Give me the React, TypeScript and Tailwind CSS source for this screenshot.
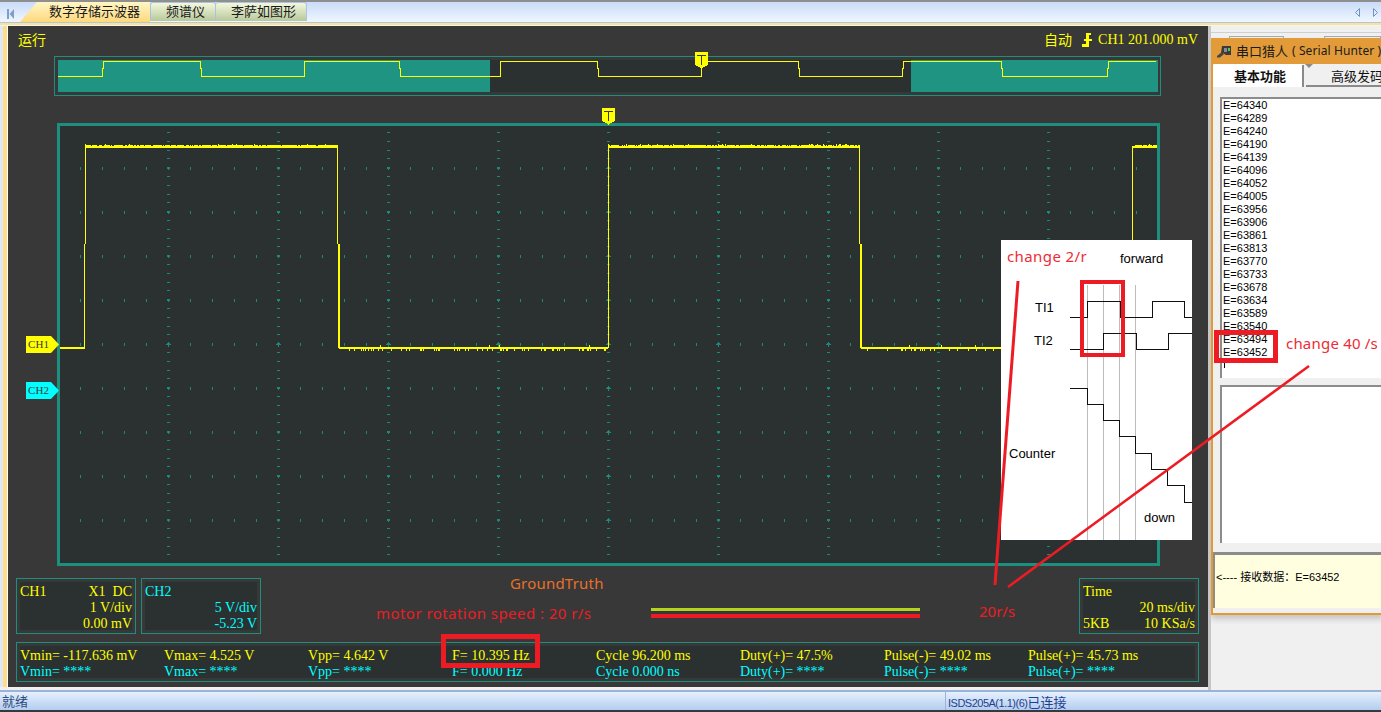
const TEAL = "#1a8a7a";
const YELLOW = "#ffff00";
const RED = "#ed1c24";

const listValues = [64340, 64289, 64240, 64190, 64139, 64096, 64052, 64005, 63956, 63906, 63861, 63813, 63770, 63733, 63678, 63634, 63589, 63540, 63494, 63452];

const stats = [
  ["Vmin= -117.636 mV", "Vmin= ****"],
  ["Vmax= 4.525 V", "Vmax= ****"],
  ["Vpp= 4.642 V", "Vpp= ****"],
  ["F= 10.395 Hz", "F= 0.000 Hz"],
  ["Cycle 96.200 ms", "Cycle 0.000 ns"],
  ["Duty(+)= 47.5%", "Duty(+)= ****"],
  ["Pulse(-)= 49.02 ms", "Pulse(-)= ****"],
  ["Pulse(+)= 45.73 ms", "Pulse(+)= ****"],
];

// cheap repeatable noise for the trace
function noise(i: number) {
  const v = Math.sin(i * 12.9898) * 43758.5453;
  return v - Math.floor(v);
}

function range(from: number, to: number, step = 1) {
  const out: number[] = [];
  for (let v = from; v <= to; v += step) out.push(v);
  return out;
}

function Grid() {
  const majorX = range(168, 1048, 110);
  const majorY = range(169, 521, 44);
  const tickX = range(80, 1146, 22);
  return (
    <g fill={TEAL}>
      {majorY.map((y) =>
        tickX.map((x) => (
          <rect key={`h${x}-${y}`} x={x} y={y - 1} width={1} height={3} />
        )),
      )}
      {majorX.map((x) =>
        range(0, 49).map((i) => {
          const y = Math.round(133 + i * 8.8);
          return <rect key={`v${x}-${i}`} x={x - 1} y={y} width={3} height={1} />;
        }),
      )}
      {majorX.map((x) =>
        majorY.map((y) => {
          // the picture's crosses vary: full size on some, small on the others
          const big = y === 345 || x === 608;
          return big ? (
            <path key={`c${x}-${y}`} d={`M${x - 2} ${y}h5v1h-5zM${x} ${y - 2}h1v5h-1z`} />
          ) : (
            <path key={`c${x}-${y}`} d={`M${x - 1} ${y}h3v1h-3zM${x} ${y - 1}h1v3h-1z`} />
          );
        }),
      )}
    </g>
  );
}

function TraceTop({ from, to }: { from: number; to: number }) {
  return (
    <g fill={YELLOW}>
      <rect x={from} y={147} width={to - from} height={2} />
      {range(from, to - 1).map((x) =>
        noise(x) > 0.22 ? <rect key={x} x={x} y={noise(x * 3) > 0.93 ? 145 : 146} width={1} height={noise(x * 3) > 0.93 ? 2 : 1} /> : null,
      )}
    </g>
  );
}

function TraceLow({ from, to }: { from: number; to: number }) {
  return (
    <g fill={YELLOW}>
      <rect x={from} y={348} width={to - from} height={2} />
      {range(from, to - 1).map((x) =>
        noise(x + 7) > 0.8 ? <rect key={x} x={x} y={noise(x) > 0.9 ? 346 : 350} width={1} height={2} /> : null,
      )}
    </g>
  );
}

function ScopeScreen() {
  return (
    <svg viewBox="60 127 1097 437" width={1097} height={437} shapeRendering="crispEdges" className="block">
      <Grid />
      <rect x={60} y={348} width={25} height={2} fill={YELLOW} />
      <TraceTop from={86} to={338} />
      <TraceLow from={339} to={608} />
      <TraceTop from={608} to={860} />
      <TraceLow from={861} to={1133} />
      <TraceTop from={1133} to={1157} />
      <g fill={YELLOW}>
        <rect x={85} y={145} width={1} height={100} />
        <rect x={84} y={245} width={1} height={104} />
        <rect x={337} y={147} width={1} height={98} />
        <rect x={338} y={245} width={2} height={104} />
        <rect x={608} y={145} width={1} height={204} />
        <rect x={859} y={147} width={1} height={98} />
        <rect x={860} y={245} width={2} height={104} />
        <rect x={1132} y={147} width={1} height={202} />
      </g>
    </svg>
  );
}

function MiniMap() {
  const d =
    "M58 77.5H102.5V69.5H103.5V62.5H200.5V69.5H201.5V77.5H304.5V62.5H399.5V69.5H400.5V77.5H500.5V62.5H597.5V69.5H598.5V77.5H701.5V62.5H798.5V69.5H799.5V77.5H902.5V69.5H903.5V62.5H1001.5V69.5H1002.5V77.5H1107.5V69.5H1108.5V62.5H1156";
  return (
    <svg viewBox="55 58 1105 38" width={1105} height={38} shapeRendering="crispEdges" className="block">
      <rect x={58} y={61} width={1100} height={32} fill="#2b3030" />
      <rect x={58} y={61} width={432} height={32} fill="#1f9483" />
      <rect x={911} y={61} width={247} height={32} fill="#1f9483" />
      <path d={d} fill="none" stroke={YELLOW} strokeWidth={1} />
    </svg>
  );
}

function TMarker({ className }: { className: string }) {
  return (
    <svg viewBox="0 0 13 17" width={13} height={17} shapeRendering="crispEdges" className={className}>
      <path d="M0 0H13V13H12V14H10V15H8V16H7V17H6V16H5V15H3V14H1V13H0Z" fill={YELLOW} />
      <path d="M2 3H11V4H7V13H6V4H2Z" fill="#383838" />
    </svg>
  );
}

function ChTag({ label, bg, className }: { label: string; bg: string; className: string }) {
  return (
    <div className={`absolute flex h-[17px] w-[33px] ${className}`}>
      <div className={`w-[25px] text-center font-['Liberation_Serif',serif] text-[11px] leading-[17px] text-[#3a3a3a] ${bg}`}>{label}</div>
      <svg viewBox="0 0 8 17" width={8} height={17} className="block">
        <path d="M0 0L8 8.5L0 17Z" fill={label === "CH1" ? YELLOW : "#00ffff"} />
      </svg>
    </div>
  );
}

function ChannelBox({ rows, color, width = "w-[120px]" }: { rows: [string, string][]; color: string; width?: string }) {
  return (
    <div className={`h-[56px] ${width} shrink-0 border border-[#1d8f7e] p-[3px]`}>
      <div className={`h-full bg-[#2b3030] pt-[2px] font-['Liberation_Serif',serif] text-[14px] leading-[16px] ${color}`}>
        {rows.map(([l, r], i) => (
          <div key={i} className="flex h-[16px] justify-between whitespace-pre">
            <span>{l}</span>
            <span>{r}</span>
          </div>
        ))}
      </div>
    </div>
  );
}

function Tabs() {
  return (
    <div className="relative flex h-[20px] bg-gradient-to-b from-[#c9dcf8] to-[#f0f6ff] pl-[20px] font-['Noto_Sans_CJK_SC',sans-serif] text-[13px] text-[#1a1a1a]">
      <svg viewBox="0 0 7 10" width={7} height={10} className="absolute left-[7px] top-[7px]">
        <path d="M0 0H2V10H0ZM7 0V10L2.5 5Z" fill="#7f9fca" />
      </svg>
      <div className="flex h-[20px] w-[130px] items-center bg-gradient-to-b from-[#fff6c4] to-[#ffd87c] pb-[3px] pl-[29px] leading-none [clip-path:polygon(17px_0,100%_0,100%_100%,0_100%)]">
        数字存储示波器
      </div>
      <div className="flex h-[19px] w-[66px] items-center rounded-t-[3px] border-x border-t border-[#a8c4e4] bg-gradient-to-b from-[#f4f8dc] to-[#b8c89c] pb-[3px] pl-[15px] leading-none">频谱仪</div>
      <div className="flex h-[19px] w-[91px] items-center rounded-t-[3px] border-r border-t border-[#a8c4e4] bg-gradient-to-b from-[#f4f8dc] to-[#b8c89c] pb-[3px] pl-[15px] leading-none">李萨如图形</div>
      <div className="ml-auto flex items-center gap-[13px] pr-[3px]">
        <svg viewBox="0 0 5 9" width={5} height={9}>
          <path d="M4.5 .5V8.5L.5 4.5Z" fill="none" stroke="#6f94c4" />
        </svg>
        <svg viewBox="0 0 5 9" width={5} height={9}>
          <path d="M.5 .5V8.5L4.5 4.5Z" fill="none" stroke="#6f94c4" />
        </svg>
      </div>
    </div>
  );
}

function RightPanel() {
  return (
    <div className="h-full w-[173px] shrink-0 overflow-hidden border-l-[3px] border-[#c6c6c6] bg-[#f0f0f0]">
      <div className="mt-[6px] flex h-[6px] gap-[18px] border-t border-[#cfcfcf] pl-[18px]">
        <div className="mt-[3px] h-[3px] w-[58px] border-x border-t border-[#a8a8a8]" />
        <div className="ml-[22px] mt-[3px] h-[3px] w-[60px] border-x border-t border-[#a8a8a8]" />
      </div>
      <div className="h-[577px] w-[172px] border-b-2 border-l-2 border-[#e39a2e] bg-[#f0f0f0] shadow-[0_4px_6px_rgba(0,0,0,0.18)]">
        <div className="flex h-[26px] items-center whitespace-nowrap bg-[#e29b38] pl-[4px] font-['Noto_Sans',sans-serif] text-[12px] text-[#1a1a1a]">
          <svg viewBox="0 0 15 13" width={15} height={13} className="mr-[4px] shrink-0">
            <path d="M5 1H14V10H9L6 8H4Z" fill="#3a3a3a" />
            <path d="M0 11L5 7L7 9L3 12.5H0Z" fill="#444" />
            <rect x={11} y={3} width={2} height={3} fill="#5ac46a" />
            <rect x={7} y={3} width={3} height={4} fill="#8a8a8a" />
          </svg>
          <span className="font-['Noto_Sans_CJK_SC',sans-serif] text-[13px]">串口猎人</span>
          <span className="ml-[4px] tracking-[0.1px]">( Serial Hunter )</span>
        </div>
        <div className="relative flex h-[23px] font-['Noto_Sans_CJK_SC',sans-serif] text-[13px] leading-[24px] text-[#111]">
          <div className="relative h-[23px] w-[95px] rounded-t-[3px] bg-white pl-[21px] font-bold">
            基本功能
            <div className="absolute right-0 top-[1px] h-[22px] w-[2px] bg-[#8a8a8a]" />
          </div>
          <svg viewBox="0 0 8 4" width={8} height={4} className="absolute left-[92px] top-0">
            <path d="M0 0H8L4 4Z" fill="#8a8a8a" />
          </svg>
          <div className="ml-[2px] h-[23px] flex-1 whitespace-nowrap border-b-2 border-[#8a8a8a] pl-[25px]">高级发码</div>
        </div>
        <div className="pl-[7px] pt-[10px]">
          <div className="h-[281px] w-[170px] border-l-2 border-t-2 border-[#8c8c8c] bg-white pl-[1px] font-['Liberation_Sans',sans-serif] text-[11px] leading-[13px] text-black">
            {listValues.map((v) => (
              <div key={v} className="h-[13px]">E={v}</div>
            ))}
            <div className="ml-[1px] mt-[1px] h-[8px] w-px bg-black" />
          </div>
          <div className="mt-[7px] h-[158px] w-[170px] border-l-2 border-t-2 border-[#8c8c8c] bg-white" />
        </div>
        <div className="mt-[9px] h-[3px] bg-[#8c8c8c]" />
        <div className="h-[53px] whitespace-nowrap border-l-2 border-[#8c8c8c] bg-[#ffffe0] pl-[1px] pt-[14px] font-['Noto_Sans_CJK_SC',sans-serif] text-[11px] leading-[15px] text-black">
          <span className="font-['Liberation_Sans',sans-serif]">&lt;---- </span>接收数据：<span className="font-['Liberation_Sans',sans-serif]">E=63452</span>
        </div>
      </div>
    </div>
  );
}

function PictureOverlay() {
  return (
    <div className="absolute left-[1001px] top-[240px] h-[300px] w-[191px] bg-white font-['Liberation_Sans',sans-serif] text-[13px] leading-[14px] text-black">
      <span className="absolute left-[6px] top-[5px] font-['Noto_Sans',sans-serif] text-[15px] leading-[22px] tracking-[0.4px] text-[#ee2b36]">change 2/r</span>
      <span className="absolute left-[119px] top-[12px]">forward</span>
      <span className="absolute left-[34px] top-[61px]">TI1</span>
      <span className="absolute left-[33px] top-[94px]">TI2</span>
      <span className="absolute left-[8px] top-[207px]">Counter</span>
      <span className="absolute left-[143px] top-[271px]">down</span>
      <svg viewBox="1001 240 191 300" width={191} height={300} className="absolute inset-0" shapeRendering="crispEdges">
        <g stroke="#bdbdbd" fill="none">
          <path d="M1087.5 285V540M1103.5 285V540M1119.5 285V540M1135.5 285V540" />
        </g>
        <g stroke="#111" fill="none">
          <path d="M1070 317.5H1087.5V301.5H1120.5V317.5H1152.5V301.5H1184.5V317.5H1192" />
          <path d="M1070 349.5H1103.5V333.5H1136.5V349.5H1168.5V333.5H1192" />
          <path d="M1070 388.5H1087.5V404.5H1103.5V420.5H1119.5V436.5H1135.5V453.5H1151.5V469.5H1167.5V485.5H1184.5V502.5H1192" />
        </g>
      </svg>
    </div>
  );
}

function RedMarks() {
  return (
    <>
      <svg viewBox="0 0 1381 712" width={1381} height={712} className="pointer-events-none absolute left-0 top-0">
        <g fill="none" stroke={RED}>
          <path d="M1018 281L995 585" strokeWidth={3} />
          <path d="M1309 366L1008 587" strokeWidth={2.5} />
          <rect x={1082} y={282} width={41} height={73} strokeWidth={4} />
          <rect x={1216.5} y={332.5} width={59} height={28} strokeWidth={5} />
          <rect x={443.5} y={636.5} width={94} height={29} strokeWidth={5} />
        </g>
      </svg>
      <span className="absolute left-[1286px] top-[332px] font-['Noto_Sans',sans-serif] text-[15px] leading-[22px] tracking-[0.2px] text-[#ee2b36]">change 40 /s</span>
    </>
  );
}

export default function App() {
  return (
    <div className="relative flex h-[712px] w-[1381px] flex-col overflow-hidden bg-[#f0f0f0]">
      <div className="h-[2px] bg-[#8f8f8f]" />
      <Tabs />
      <div className="h-[3px] border-t border-[#a9c6ec] bg-[#ffe28e]" />
      <div className="h-[1px] bg-[#f4f4f4]" />
      <div className="flex h-[664px]">
        <div className="flex h-[661px] w-[1208px] shrink-0 bg-[#dce8f8] pl-[3px]">
          <div className="w-[4px] bg-[#ffdc88]" />
          <div className="w-[1px] bg-white" />
          <div className="w-[1200px] bg-[#383838] pt-[1px]">
            <div className="flex h-[29px] items-center justify-between px-[10px] pb-[4px] text-[14px] text-[#ffff00]">
              <span className="font-['Noto_Sans_CJK_SC',sans-serif]">运行</span>
              <div className="flex items-center">
                <span className="font-['Noto_Sans_CJK_SC',sans-serif]">自动</span>
                <svg viewBox="0 0 10 14" width={10} height={14} className="ml-[10px] mr-[6px]" shapeRendering="crispEdges">
                  <path d="M4 0H9V2H7V6H10V8H7V14H0V11H4V8H2V6H4Z" fill={YELLOW} />
                </svg>
                <span className="font-['Liberation_Serif',serif]">CH1 201.000 mV</span>
              </div>
            </div>
            <div className="relative ml-[46px] h-[40px] w-[1107px] border border-[#1d8f7e]">
              <MiniMap />
              <TMarker className="absolute left-[640px] top-[-5px]" />
            </div>
            <div className="relative ml-[49px] mt-[27px] h-[443px] w-[1103px] border-[3px] border-[#1d8f7e] bg-[#2b3030]">
              <ScopeScreen />
              <TMarker className="absolute left-[542px] top-[-18px]" />
              <ChTag label="CH1" bg="bg-[#ffff00]" className="left-[-34px] top-[210px]" />
              <ChTag label="CH2" bg="bg-[#00ffff]" className="left-[-34px] top-[256px]" />
            </div>
            <div className="ml-[8px] mt-[12px] flex h-[56px] w-[1183px]">
              <ChannelBox
                color="text-[#ffff00]"
                rows={[
                  ["CH1", "X1  DC"],
                  ["", "1 V/div"],
                  ["", "0.00 mV"],
                ]}
              />
              <div className="ml-[5px]">
                <ChannelBox
                  color="text-[#00ffff]"
                  rows={[
                    ["CH2", ""],
                    ["", "5 V/div"],
                    ["", "-5.23 V"],
                  ]}
                />
              </div>
              <div className="min-w-0 flex-1 font-['Noto_Sans',sans-serif] text-[15px] leading-[20px]">
                <div className="-mt-[5px] pl-[249px] tracking-[0.2px] text-[#e8702a]">GroundTruth</div>
                <div className="mt-[10px] flex h-[20px] items-center text-[#ed1c24]">
                  <span className="ml-[115px] w-[275px] shrink-0 whitespace-nowrap tracking-[0.45px]">motor rotation speed : 20 r/s</span>
                  <div className="w-[269px] shrink-0">
                    <div className="h-[3px] bg-[#b4d41e]" />
                    <div className="mt-[3px] h-[4px] bg-[#ed1c24]" />
                  </div>
                  <span className="-mt-[4px] ml-[59px]">20r/s</span>
                </div>
              </div>
              <ChannelBox
                color="text-[#ffff00]"
                rows={[
                  ["Time", ""],
                  ["", "20 ms/div"],
                  ["5KB", "10 KSa/s"],
                ]}
              />
            </div>
            <div className="ml-[8px] mt-[8px] h-[40px] w-[1183px] border border-[#1d8f7e] p-[3px]">
              <div className="grid h-full grid-cols-[repeat(8,144px)] bg-[#2b3030] pt-[2px] font-['Liberation_Serif',serif] text-[14px] leading-[16px]">
                {stats.map(([a, b]) => (
                  <div key={a} className="whitespace-nowrap">
                    <div className="text-[#ffff00]">{a}</div>
                    <div className="text-[#00ffff]">{b}</div>
                  </div>
                ))}
              </div>
            </div>
          </div>
        </div>
        <RightPanel />
      </div>
      <div className="flex h-[20px] items-center border-t-2 border-[#9ab4d8] bg-gradient-to-b from-[#e6f0fd] to-[#b4cdef] font-['Noto_Sans_CJK_SC',sans-serif] text-[13px] text-[#2f4f80]">
        <span className="w-[945px] shrink-0 pl-[2px]">就绪</span>
        <span className="h-full border-l border-[#9ab4d8] pl-[2px] text-[#1f3f90]">
          <span className="font-['Liberation_Sans',sans-serif] text-[11px] tracking-[-0.5px]">ISDS205A(1.1)(6)</span>已连接
        </span>
      </div>
      <div className="h-[2px] bg-[#33393f]" />
      <PictureOverlay />
      <RedMarks />
    </div>
  );
}
